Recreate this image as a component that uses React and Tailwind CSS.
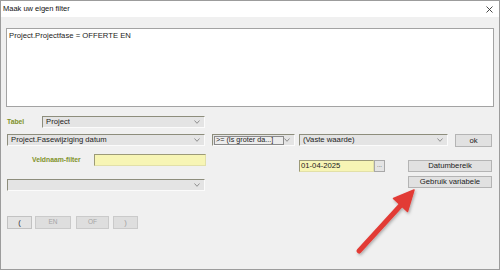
import React from "react";

function Chevron() {
  return (
    <svg width="6" height="4" viewBox="0 0 6 4" className="shrink-0">
      <path d="M0.5 0.5 L3 3.3 L5.5 0.5" fill="none" stroke="#7a7a7a" strokeWidth="0.8" />
    </svg>
  );
}

function Select({ className = "", children }) {
  return (
    <div
      className={
        "h-[12px] flex items-center justify-between bg-[#e4e4e4] border-t border-l border-t-[#8d8d7c] border-l-[#8d8d7c] border-b border-r border-b-[#fbfbfb] border-r-[#fbfbfb] pl-[3px] pr-[4px] text-[7.7px] leading-none text-[#222] " +
        className
      }
    >
      <span className="truncate">{children}</span>
      <Chevron />
    </div>
  );
}

function Btn({ className = "", children }) {
  return (
    <div
      className={
        "flex items-center justify-center bg-[#e1e1e1] border border-[#b4b4b4] text-[7.7px] leading-none text-[#222] " +
        className
      }
    >
      {children}
    </div>
  );
}

export default function App() {
  return (
    <div className="w-[500px] h-[270px] relative overflow-hidden bg-[#f0f0f0] border border-[#9c9c9c] font-['Liberation_Sans',Arial,sans-serif] text-[#1a1a1a] leading-none">
      {/* Title bar */}
      <div className="h-[16px] bg-white flex items-center justify-between pl-[2px] pr-[6px]">
        <span className="text-[7.5px] leading-none text-[#111]">Maak uw eigen filter</span>
        <svg width="7" height="7" viewBox="0 0 7 7">
          <path d="M0.5 0.5 L6.5 6.5 M6.5 0.5 L0.5 6.5" stroke="#333" strokeWidth="0.9" />
        </svg>
      </div>

      {/* Expression area */}
      <div className="mt-[11px] ml-[5px] w-[488px] h-[79px] bg-white border border-[#a3a3a3] pl-[2px] pt-[3px] text-[7.7px] leading-none text-[#222]">
        Project.Projectfase = OFFERTE EN
      </div>

      {/* Tabel row */}
      <div className="mt-[9px] h-[12px] flex items-center">
        <span className="ml-[6px] w-[35px] text-[6.8px] font-bold text-[#80922a] leading-none">Tabel</span>
        <Select className="w-[163px]">Project</Select>
      </div>

      {/* Field / operator / value row */}
      <div className="mt-[6px] flex items-start">
        <Select className="ml-[6px] w-[198px]">Project.Fasewijziging datum</Select>
        <div className="ml-[7px] w-[83px] h-[12px] flex items-center justify-between bg-[#e4e4e4] border-t border-l border-t-[#8d8d7c] border-l-[#8d8d7c] border-b border-r border-b-[#fbfbfb] border-r-[#fbfbfb] pl-[1px] pr-[4px]">
          <div className="w-[70px] h-[9px] flex items-center border border-[#8a8a8a] bg-[#ececec] px-[1px] text-[7.2px] leading-none text-[#222] overflow-hidden whitespace-nowrap">
            &gt;= (Is groter da...]
          </div>
          <Chevron />
        </div>
        <Select className="ml-[4px] w-[149px]">(Vaste waarde)</Select>
        <Btn className="ml-[7px] w-[37px] h-[13px]">ok</Btn>
      </div>

      {/* Filter / date / buttons area */}
      <div className="mt-[7px] flex items-start">
        <div className="ml-[6px] w-[199px] flex flex-col">
          <div className="h-[12px] flex items-center">
            <span className="ml-[25px] text-[6.8px] font-bold text-[#80922a] leading-none">Veldnaam-filter</span>
            <div className="ml-auto w-[112px] h-[12px] bg-[#f7f5b5] border-t border-l border-t-[#9c9a78] border-l-[#9c9a78] border-b border-r border-b-[#e2e0a8] border-r-[#e2e0a8]" />
          </div>
          <Select className="mt-[13px] w-[198px]"></Select>
        </div>

        <div className="ml-[93px] mt-[6px] flex">
          <div className="w-[75px] h-[12px] flex items-center bg-[#f7f5b5] border-t border-l border-t-[#9c9a78] border-l-[#9c9a78] border-b border-r border-b-[#e2e0a8] border-r-[#e2e0a8] pl-[1px] text-[7.7px] leading-none text-[#222]">
            01-04-2025
          </div>
          <div className="w-[11px] h-[12px] flex items-end justify-center pb-[3px] bg-[#e4e4e4] border border-[#a8a8a8] text-[6px] leading-none text-[#333]">
            ...
          </div>
        </div>

        <div className="ml-[23px] mt-[6px] flex flex-col">
          <Btn className="w-[84px] h-[12px]">Datumbereik</Btn>
          <Btn className="mt-[4px] w-[84px] h-[12px]">Gebruik variabele</Btn>
        </div>
      </div>

      {/* Logic buttons */}
      <div className="mt-[25px] ml-[6px] flex items-start">
        <div className="w-[25px] h-[13px] flex items-center justify-center bg-[#e3e3e3] border border-[#c2c2c2] text-[7.7px] leading-none text-[#333]">(</div>
        <div className="ml-[3px] w-[36px] h-[13px] flex items-center justify-center bg-[#dedede] border border-[#cacaca] text-[6.5px] leading-none text-[#a5a5a5]">EN</div>
        <div className="ml-[5px] w-[33px] h-[13px] flex items-center justify-center bg-[#dedede] border border-[#cacaca] text-[6.5px] leading-none text-[#a5a5a5]">OF</div>
        <div className="ml-[4px] w-[25px] h-[13px] flex items-center justify-center bg-[#dedede] border border-[#cacaca] text-[7.7px] leading-none text-[#a0a0a0]">)</div>
      </div>

      {/* Red annotation arrow */}
      <svg className="absolute left-0 top-0 pointer-events-none" width="500" height="270" viewBox="0 0 500 270">
        <defs>
          <filter id="sh" x="-20%" y="-20%" width="140%" height="140%">
            <feDropShadow dx="1" dy="1.5" stdDeviation="1.5" floodColor="#000" floodOpacity="0.3" />
          </filter>
        </defs>
        <g filter="url(#sh)">
          <line x1="358" y1="250" x2="401" y2="203" stroke="#e23b36" strokeWidth="5" strokeLinecap="round" />
          <polygon points="413,189 392.5,197.5 406.5,210.5" fill="#e23b36" stroke="#e23b36" strokeWidth="1.5" strokeLinejoin="round" />
        </g>
      </svg>
    </div>
  );
}
